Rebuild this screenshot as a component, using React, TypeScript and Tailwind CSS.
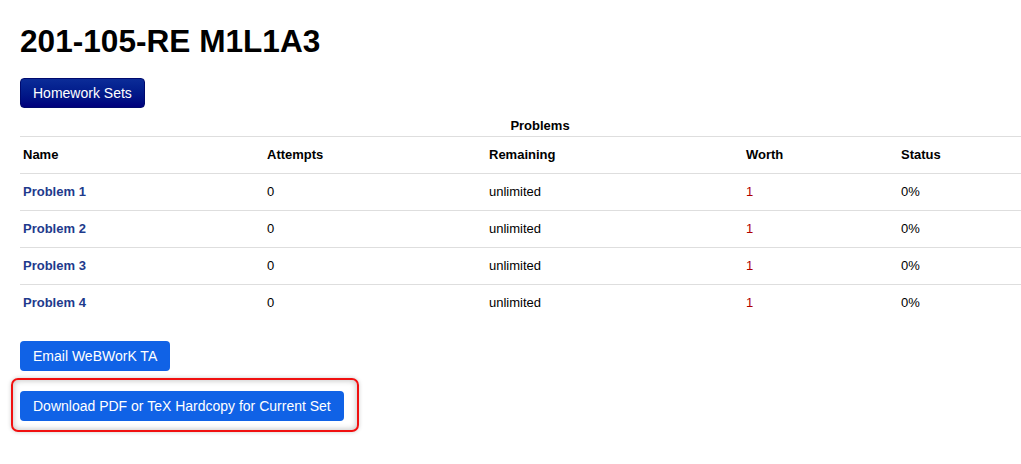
import React from 'react';

const problems = [1, 2, 3, 4];

export default function App() {
  return (
    <div className="min-h-screen w-[1021px] overflow-hidden bg-white pl-5 pt-[22px] text-black" style={{ fontFamily: '"Liberation Sans", Arial, sans-serif' }}>
      <h1 className="text-[31.6px] font-bold leading-[38px]">201-105-RE M1L1A3</h1>

      <button className="mt-[18px] rounded-[4px] border border-[#000a6e] bg-gradient-to-b from-[#0c2c98] to-[#00007c] px-[12px] py-[5px] text-[14px] leading-[18px] text-white">
        Homework Sets
      </button>

      <table className="mt-[10px] w-[1040px] table-fixed border-collapse text-[13px] leading-[16px]">
        <caption className="pb-[2px] text-center font-bold leading-[16px]">Problems</caption>
        <colgroup>
          <col className="w-[243px]" />
          <col className="w-[222px]" />
          <col className="w-[257px]" />
          <col className="w-[155px]" />
          <col />
        </colgroup>
        <thead>
          <tr className="border-t border-[#dedede] text-left">
            <th className="px-[3px] py-[10px] font-bold">Name</th>
            <th className="px-[4px] py-[10px] font-bold">Attempts</th>
            <th className="px-[4px] py-[10px] font-bold">Remaining</th>
            <th className="px-[4px] py-[10px] font-bold">Worth</th>
            <th className="px-[4px] py-[10px] font-bold">Status</th>
          </tr>
        </thead>
        <tbody>
          {problems.map((n) => (
            <tr key={n} className="border-t border-[#dedede]">
              <td className="px-[3px] py-[10px] font-bold text-[#1e3a8c]">Problem {n}</td>
              <td className="px-[4px] py-[10px]">0</td>
              <td className="px-[4px] py-[10px]">unlimited</td>
              <td className="px-[4px] py-[10px] text-[#b00000]">1</td>
              <td className="px-[4px] py-[10px]">0%</td>
            </tr>
          ))}
        </tbody>
      </table>

      <div className="mt-[20px] flex flex-col items-start gap-[20px]">
        <button className="rounded-[4px] bg-[#1062e6] px-[13px] py-[6px] text-[14px] leading-[18px] text-white">
          Email WeBWorK TA
        </button>
        <div className="relative">
          <button className="rounded-[4px] bg-[#1062e6] px-[13px] py-[6px] text-[14px] leading-[18px] text-white">
            Download PDF or TeX Hardcopy for Current Set
          </button>
          <div className="pointer-events-none absolute -top-[13px] -bottom-[11px] -left-[9px] -right-[15px] rounded-[7px] border-2 border-[#f01010] shadow-[inset_0_0_6px_rgba(0,0,0,0.28),0_0_4px_rgba(0,0,0,0.2)]" />
        </div>
      </div>
    </div>
  );
}
